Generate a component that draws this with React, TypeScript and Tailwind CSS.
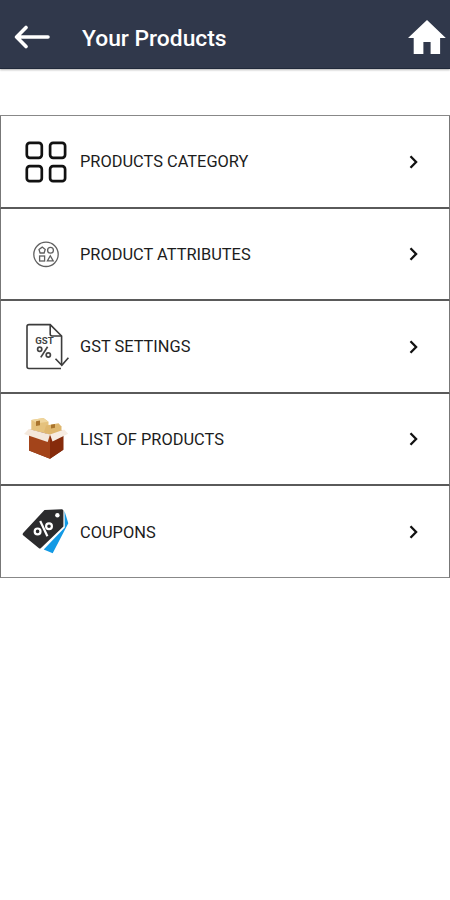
import React from 'react';

interface MenuItem {
  label: string;
  icon: React.ReactNode;
}

const iconClass = 'h-12 w-12 shrink-0 overflow-visible';

const CategoryIcon: React.FC = () => (
  <svg viewBox="0 0 48 48" className={iconClass} fill="none" stroke="#111" strokeWidth="2.7">
    <rect x="4.8" y="4.8" width="15" height="15" rx="3" />
    <rect x="28.1" y="4.8" width="15" height="15" rx="3" />
    <rect x="4.8" y="28.2" width="15" height="15" rx="3" />
    <rect x="28.1" y="28.2" width="15" height="15" rx="3" />
  </svg>
);

const AttributesIcon: React.FC = () => (
  <svg viewBox="0 0 48 48" className={iconClass} fill="none" stroke="#606060" strokeWidth="1.3">
    <circle cx="24" cy="24.3" r="12.2" />
    <path d="M20.2 17.1l3 2.3-1.1 3.6h-4l-1.1-3.6z" />
    <circle cx="28.5" cy="20.3" r="2.9" />
    <rect x="17.6" y="26" width="5" height="5" />
    <path d="M28.3 25.8l2.9 5.1h-5.8z" />
  </svg>
);

const GstIcon: React.FC = () => (
  <svg viewBox="0 0 48 48" className={iconClass} fill="none" stroke="#3c3c3c" strokeWidth="1.6">
    <path d="M39 45.5H7a2 2 0 0 1-2-2V3.6a2 2 0 0 1 2-2h21.2L39.6 13v28.5" />
    <path d="M28.2 1.6V11a2 2 0 0 0 2 2h9.4" />
    <path d="M33.5 35.8l6.3 6.5 6.6-7.6" />
    <text x="13.2" y="21.3" textLength="18.4" lengthAdjust="spacingAndGlyphs" fontSize="8.8" fontWeight="700" fill="#444" stroke="none" className="font-[Roboto,sans-serif]">GST</text>
    <g strokeWidth="1.7" stroke="#444">
      <circle cx="17.7" cy="26.2" r="2.1" />
      <circle cx="26.3" cy="32" r="2.1" />
      <path d="M25.6 23.8l-6.8 10.6" />
    </g>
  </svg>
);

const BoxIcon: React.FC = () => (
  <svg viewBox="0 0 48 48" className={iconClass}>
    <path d="M7 15L27 12l14.3 4v18.7L28 43.8 7 35.5z" fill="#7a2c10" />
    {/* parcels inside */}
    <path d="M9.3 5L21.5 3l5 3.8V19L9.3 15z" fill="#e5c27d" />
    <path d="M9.3 5L21.5 3l5 3.8-11 1.4z" fill="#efd59d" />
    <path d="M14 6.3l4-.8v4.8l-4 .8z" fill="#a9742d" />
    <path d="M24 10.5l12.5-2.2 3 3.2v6L28 20.5 22 17z" fill="#dfb76e" />
    <path d="M29 9.8l4-.7v3.6l-4 .8z" fill="#a9742d" />
    {/* carton */}
    <path d="M7 17.5l21 4v22.3L7 35.5z" fill="#a3441a" />
    <path d="M28 21.5l13.3-4v17.2L28 43.8z" fill="#862b0b" />
    <path d="M6.8 14L28 19.5 25.7 27 2 19z" fill="#f4e8dc" />
    <path d="M28 19.5l14.2-5 4 4.2-15.7 7.8z" fill="#f7ece2" />
  </svg>
);

const CouponIcon: React.FC = () => (
  <svg viewBox="0 5.5 48 48" className={iconClass}>
    <path d="M42.5 8.5l3.8 12.2-15.6 30-9-3.8L42.8 25z" fill="#139ae5" />
    <path d="M22.5 7.4l17.3-.7q1.6 0 1.6 1.6V24L19 45.6q-1.2 1-2.3 0L1.1 32.8q-1.1-1 0-2.2z" fill="#2b2b2d" />
    <circle cx="35.4" cy="12.7" r="2.2" fill="#fff" />
    <g fill="none" stroke="#fff" strokeWidth="2.2">
      <circle cx="15.6" cy="28.9" r="2.9" />
      <circle cx="27" cy="23.8" r="2.9" />
      <path d="M18.2 18.5l7.2 15.2" />
    </g>
  </svg>
);

const items: MenuItem[] = [
  { label: 'PRODUCTS CATEGORY', icon: <CategoryIcon /> },
  { label: 'PRODUCT ATTRIBUTES', icon: <AttributesIcon /> },
  { label: 'GST SETTINGS', icon: <GstIcon /> },
  { label: 'LIST OF PRODUCTS', icon: <BoxIcon /> },
  { label: 'COUPONS', icon: <CouponIcon /> },
];

const App: React.FC = () => {
  return (
    <div className="min-h-screen w-full bg-white font-[Roboto,'Liberation_Sans',sans-serif] text-[#1c1c1c]">
      {/* Header */}
      <header className="flex h-[69px] items-center border-b border-[#20293a] bg-[#30384b] pt-[5px] pr-1 pl-[14px] text-white shadow-[0_1px_2px_rgba(0,0,0,0.3)]">
        <button aria-label="Back">
          <svg viewBox="0 0 36 24" className="h-6 w-9" fill="none" stroke="#fff" strokeWidth="3.6" strokeLinecap="round" strokeLinejoin="round">
            <path d="M12 2.5L2.6 12l9.4 9.5M3 12h31" />
          </svg>
        </button>
        <h1 className="ml-8 pt-[5px] text-[22.8px] font-medium">Your Products</h1>
        <button aria-label="Home" className="ml-auto">
          <svg viewBox="2 3 20 17" preserveAspectRatio="none" className="h-[34px] w-[38px]" fill="#fff">
            <path d="M10.1 20v-6h3.8v6h5v-8h3L12 3 2 12h3v8z" />
          </svg>
        </button>
      </header>

      {/* Menu */}
      <main className="mt-[46px] border-t border-[#888]">
        {items.map(item => (
          <div key={item.label} className="flex h-[92.5px] items-center border-x border-x-[#777] border-b-2 border-b-[#5a5a5a] pt-px pr-[31px] pl-[21px] last:h-[92px] last:border-b last:border-b-[#888]">
            {item.icon}
            <span className="ml-2.5 pt-0.5 text-[16.4px]">{item.label}</span>
            <svg viewBox="0 0 10 14" className="ml-auto h-3.5 w-2.5" fill="none" stroke="#111" strokeWidth="2.3">
              <path d="M2.5 1.3L8.1 7 2.5 12.7" />
            </svg>
          </div>
        ))}
      </main>
    </div>
  );
};

export default App;
